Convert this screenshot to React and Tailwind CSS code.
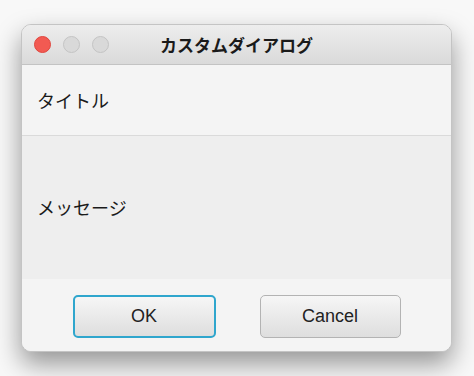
import React from 'react'

const jp = { fontFamily: '"Noto Sans CJK JP", "Noto Sans", sans-serif' }
const latin = { fontFamily: '"Liberation Sans", Arial, sans-serif' }

function TrafficLights() {
  return (
    <div className="flex items-center gap-[12px] pl-[12px]">
      <span className="w-[17px] h-[17px] rounded-full bg-[#f25a52] border border-[#e0463e]" />
      <span className="w-[17px] h-[17px] rounded-full bg-[#d9d9d9] border border-[#c4c4c4]" />
      <span className="w-[17px] h-[17px] rounded-full bg-[#d9d9d9] border border-[#c4c4c4]" />
    </div>
  )
}

export default function App() {
  return (
    <div className="w-[474px] h-[376px] bg-[#f8f8f8] pt-[24px] pl-[21px] overflow-hidden">
      <div className="w-[431px] h-[328px] rounded-[10px] overflow-hidden border border-[#c4c4c4] bg-[#f4f4f4] flex flex-col shadow-[0_12px_26px_rgba(0,0,0,0.4)]">
        {/* title bar */}
        <div className="h-[40px] shrink-0 grid grid-cols-[1fr_auto_1fr] items-center bg-gradient-to-b from-[#ededed] to-[#dadada] border-b border-[#c3c3c3]">
          <TrafficLights />
          <div className="text-[17px] font-bold text-[#1a1a1a]" style={jp}>カスタムダイアログ</div>
          <div />
        </div>

        {/* header */}
        <div className="h-[71px] shrink-0 flex items-center pl-[15px] bg-[#f4f4f4] border-b border-[#dadada]">
          <span className="text-[18px] text-[#1a1a1a]" style={jp}>タイトル</span>
        </div>

        {/* content */}
        <div className="flex-1 flex items-center pl-[15px] bg-[#eeeeee]">
          <span className="text-[18px] text-[#1a1a1a]" style={jp}>メッセージ</span>
        </div>

        {/* buttons */}
        <div className="h-[72px] shrink-0 flex items-center justify-center gap-[44px] bg-[#f4f4f4] pt-[3px]">
          <button className="w-[143px] h-[43px] rounded-[5px] border-2 border-[#2fa6cd] bg-gradient-to-b from-[#f6f6f6] to-[#dedede] text-[18px] text-[#222]" style={latin}>
            OK
          </button>
          <button className="w-[141px] h-[43px] rounded-[5px] border border-[#b3b3b3] bg-gradient-to-b from-[#f6f6f6] to-[#dedede] text-[18px] text-[#222]" style={latin}>
            Cancel
          </button>
        </div>
      </div>
    </div>
  )
}
